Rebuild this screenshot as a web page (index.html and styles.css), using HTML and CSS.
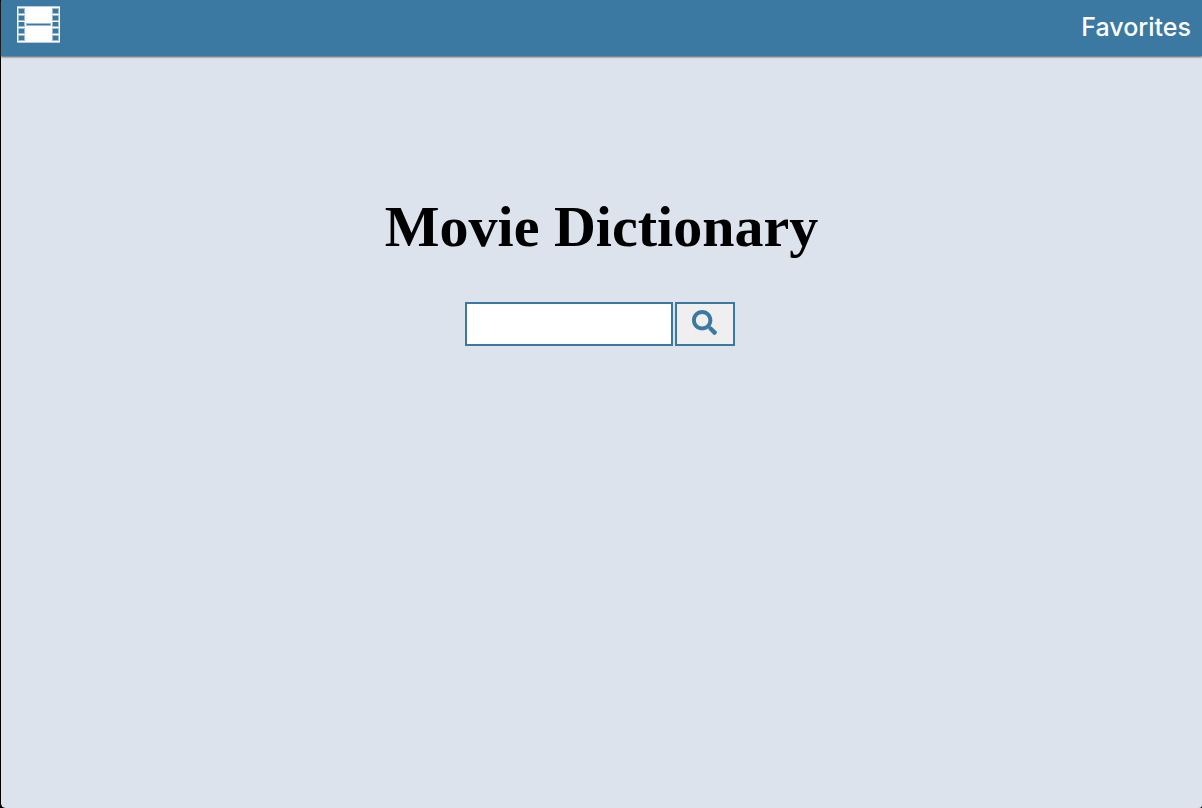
FILE: index.html
```html
<!DOCTYPE html>
<html lang="en">
<head>
<meta charset="utf-8">
<meta name="viewport" content="width=device-width, initial-scale=1">
<title>Movie Dictionary</title>
<link rel="stylesheet" href="styles.css">
</head>
<body>
<div class="app">
  <header class="navbar">
    <a class="brand" href="#" aria-label="Home">
      <svg class="film" viewBox="0 0 43 37" aria-hidden="true">
        <path class="film-edge" d="M0 0H43V37H0Z"/>
        <path class="film-body" d="M0 1H43V36H0Z"/>
        <path class="film-halo" d="M1 2h7v6h-7zM1 9h7v6h-7zM1 16h7v5h-7zM1 22h7v6h-7zM1 29h7v6h-7zM35 2h7v6h-7zM35 9h7v6h-7zM35 16h7v5h-7zM35 22h7v6h-7zM35 29h7v6h-7zM9 17h25v3h-25z"/>
        <path class="film-hole" d="M2 3h5v4h-5zM2 10h5v4h-5zM2 16h5v4h-5zM2 23h5v4h-5zM2 30h5v4h-5zM36 3h5v4h-5zM36 10h5v4h-5zM36 16h5v4h-5zM36 23h5v4h-5zM36 30h5v4h-5zM10 18h23v1h-23z"/>
      </svg>
    </a>
    <nav><a class="nav-link" href="#">Favorites</a></nav>
  </header>
  <main class="home">
    <h1 class="title">Movie Dictionary</h1>
    <form class="search">
      <input class="search-input" type="text" aria-label="Search movies">
      <button class="search-button" type="submit" aria-label="Search">
        <svg class="search-icon" viewBox="0 0 512 512" aria-hidden="true"><path d="M505 442.7L405.300 343c-4.500-4.500-10.600-7-17-7H372c27.600-35.300 44-79.700 44-128C416 93.100 322.900 0 208 0S0 93.100 0 208s93.100 208 208 208c48.300 0 92.700-16.400 128-44v16.300c0 6.400 2.500 12.500 7 17l99.700 99.700c9.400 9.400 24.600 9.400 33.900 0l28.300-28.300c9.400-9.400 9.400-24.600.1-34zM208 336c-70.700 0-128-57.200-128-128 0-70.700 57.200-128 128-128 70.700 0 128 57.200 128 128 0 70.700-57.200 128-128 128z"/></svg>
      </button>
    </form>
  </main>
</div>
</body>
</html>
```
FILE: styles.css
```css
* {
  box-sizing: border-box;
}

body {
  margin: 0;
  background: #000;
  font-family: Inter, "Liberation Sans", sans-serif;
}

.app {
  min-height: 100vh;
  border-left: 1px solid #000;
  border-radius: 0 0 3px 5px;
  background: #dce3ec;
}

.navbar {
  display: flex;
  align-items: flex-start;
  justify-content: space-between;
  height: 56px;
  padding: 6px 11px 0 16px;
  background: #3b79a3;
  box-shadow: 0 1px 2px #555;
}

.brand,
.film {
  display: block;
}

.film {
  width: 43px;
  height: 37px;
}

.film-edge {
  fill: #b5cddd;
}

.film-body {
  fill: #fff;
}

.film-halo {
  fill: #9dbcd0;
}

.film-hole {
  fill: #3b79a3;
}

.nav-link {
  display: block;
  color: #fff;
  font-size: 25px;
  font-weight: 500;
  line-height: 42px;
  text-decoration: none;
}

.home {
  display: flex;
  flex-direction: column;
  align-items: center;
  padding-top: 136px;
}

.title {
  margin: 0;
  color: #000;
  font-family: "Liberation Serif", serif;
  font-size: 58px;
  font-weight: 700;
  line-height: 70px;
  text-align: center;
}

.search {
  display: flex;
  gap: 2px;
  margin: 40px 4px 0 0;
}

.search-input,
.search-button {
  height: 44px;
  border: 2px solid #3b79a3;
  border-radius: 0;
}

.search-input {
  width: 208px;
  padding: 0 8px;
  background: #fff;
  font: inherit;
  font-size: 20px;
  outline: none;
}

.search-button {
  display: flex;
  justify-content: center;
  width: 60px;
  padding: 6px 0 0;
  background: #efefef;
}

.search-icon {
  width: 25px;
  height: 25px;
  fill: #3b79a3;
}
```
